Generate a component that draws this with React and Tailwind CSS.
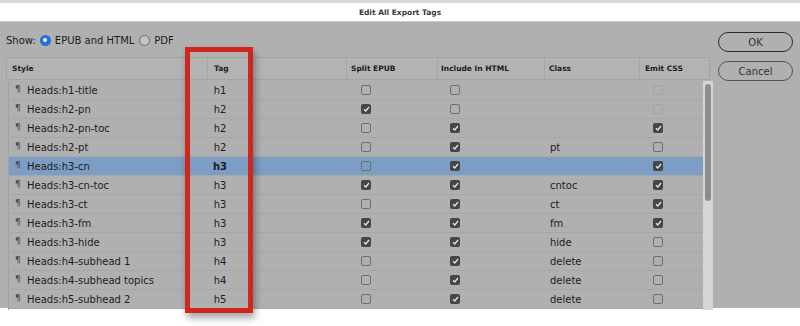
import React from "react";

const FONT = { fontFamily: '"DejaVu Sans", "Noto Sans", sans-serif' };

const ROWS = [
  { style: "Heads:h1-title", tag: "h1", split: 0, include: 0, cls: "", emit: "off" },
  { style: "Heads:h2-pn", tag: "h2", split: 1, include: 0, cls: "", emit: "off" },
  { style: "Heads:h2-pn-toc", tag: "h2", split: 0, include: 1, cls: "", emit: 1 },
  { style: "Heads:h2-pt", tag: "h2", split: 0, include: 1, cls: "pt", emit: 0 },
  { style: "Heads:h3-cn", tag: "h3", split: 0, include: 1, cls: "", emit: 1, selected: true },
  { style: "Heads:h3-cn-toc", tag: "h3", split: 1, include: 1, cls: "cntoc", emit: 1 },
  { style: "Heads:h3-ct", tag: "h3", split: 0, include: 1, cls: "ct", emit: 1 },
  { style: "Heads:h3-fm", tag: "h3", split: 1, include: 1, cls: "fm", emit: 1 },
  { style: "Heads:h3-hide", tag: "h3", split: 1, include: 1, cls: "hide", emit: 0 },
  { style: "Heads:h4-subhead 1", tag: "h4", split: 0, include: 1, cls: "delete", emit: 0 },
  { style: "Heads:h4-subhead topics", tag: "h4", split: 0, include: 1, cls: "delete", emit: 0 },
  { style: "Heads:h5-subhead 2", tag: "h5", split: 0, include: 1, cls: "delete", emit: 0 },
];

const Check = ({ state }) => {
  if (state === 1) {
    return (
      <span className="flex h-[10px] w-[10px] items-center justify-center rounded-[2px] bg-[#464646]">
        <svg width="7" height="6" viewBox="0 0 7 6">
          <path d="M1 3.2 L2.8 5 L6 1" fill="none" stroke="#e6e6e6" strokeWidth="1.3" />
        </svg>
      </span>
    );
  }
  if (state === "off") {
    return <span className="block h-[10px] w-[10px] rounded-[2px] border border-[#a2a2a2]" />;
  }
  return <span className="block h-[10px] w-[10px] rounded-[2px] border border-[#6f6f6f]" />;
};

const Radio = ({ on }) =>
  on ? (
    <span className="flex h-[11px] w-[11px] items-center justify-center rounded-full bg-[#1f6fe0]">
      <span className="h-[4px] w-[4px] rounded-full bg-white" />
    </span>
  ) : (
    <span className="block h-[11px] w-[11px] rounded-full border border-[#6a6a6a] bg-[#c4c4c4]" />
  );

const App = () => {
  return (
    <div className="relative h-[326px] w-[800px] overflow-hidden bg-white text-[#1c1c1c]" style={FONT}>
      <div className="h-[3px] bg-[#d9d9d9]" />
      <div className="flex h-[19px] items-center justify-center border-b border-[#c9c9c9] bg-white pt-[1px] text-[7.5px] font-bold text-[#3a3a3a]">
        Edit All Export Tags
      </div>

      <div className="flex h-[286px] bg-[#b0b0b0]">
        <div className="w-[713px]">
          <div className="mt-[11px] flex h-[14px] items-center pl-[6px] text-[10px]">
            <span>Show:</span>
            <span className="ml-[4px]"><Radio on /></span>
            <span className="ml-[4px]">EPUB and HTML</span>
            <span className="ml-[5px]"><Radio /></span>
            <span className="ml-[4px]">PDF</span>
          </div>

          <div className="ml-[6px] mt-[10px]">
            <div className="grid h-[23px] w-[704px] grid-cols-[200px_139px_91px_107px_95px_1fr] items-center border border-[#a3a3a3] bg-[#b3b3b3] text-[7.5px] font-bold">
              <div className="pl-[5px]">Style</div>
              <div className="flex h-full items-center border-l border-[#a6a6a6] pl-[6px]">Tag</div>
              <div className="flex h-full items-center border-l border-[#a6a6a6] pl-[4px]">Split EPUB</div>
              <div className="flex h-full items-center border-l border-[#a6a6a6] pl-[3px]">Include In HTML</div>
              <div className="flex h-full items-center border-l border-[#a6a6a6] pl-[4px]">Class</div>
              <div className="flex h-full items-center border-l border-[#a6a6a6] pl-[5px]">Emit CSS</div>
            </div>

            <div className="ml-[2px] flex h-[230px] pt-[1px]">
              <div className="w-[695px] border-l border-[#a2a2a2]">
                {ROWS.map((r) => (
                  <div
                    key={r.style}
                    className={`grid h-[19px] grid-cols-[177px_68px_86px_52px_38px_50px_70px_90px_36px_1fr] items-center border-b border-[#a7a7a7] text-[10px] ${
                      r.selected ? "bg-[#7c9dc4]" : ""
                    }`}
                  >
                    <div className="flex items-center pl-[6px]">
                      <span className="w-[12px] text-[9px] text-[#4a4a4a]">¶</span>
                      <span>{r.style}</span>
                    </div>
                    <div className={`text-center ${r.selected ? "font-bold" : ""}`}>{r.tag}</div>
                    <div />
                    <div className="flex justify-center"><Check state={r.split} /></div>
                    <div />
                    <div className="flex justify-center"><Check state={r.include} /></div>
                    <div />
                    <div>{r.cls}</div>
                    <div className="flex justify-center"><Check state={r.emit} /></div>
                    <div />
                  </div>
                ))}
              </div>
              <div className="w-[10px] bg-[#d6d6d6] px-[2px] pt-[3px]">
                <div className="h-[117px] rounded-full bg-[#8d8d8d]" />
              </div>
            </div>
          </div>
        </div>

        <div className="ml-[5px] mt-[10px] flex flex-col gap-[9px]">
          <button className="flex h-[20px] w-[75px] items-center justify-center rounded-full border-[1.5px] border-[#2a2a2a] text-[10px] text-[#333]">
            OK
          </button>
          <button className="flex h-[20px] w-[75px] items-center justify-center rounded-full border border-[#555] text-[10px] text-[#333]">
            Cancel
          </button>
        </div>
      </div>

      <div className="absolute left-[185px] top-[47px] h-[266px] w-[68px] border-[5px] border-[#d1261b] shadow-[2px_5px_7px_rgba(0,0,0,0.35)]" />
    </div>
  );
};

export default App;
